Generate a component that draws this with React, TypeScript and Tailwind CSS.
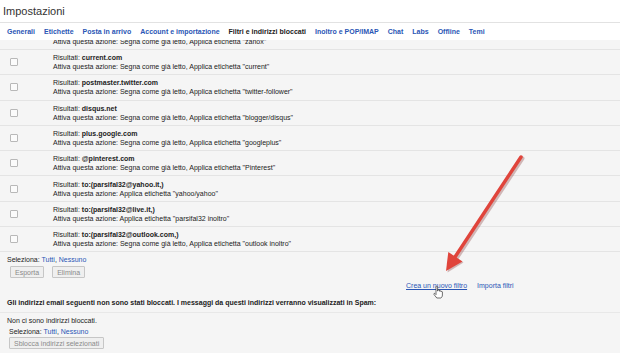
import React from "react"

const tabs = [
  "Generali",
  "Etichette",
  "Posta in arrivo",
  "Account e importazione",
  "Filtri e indirizzi bloccati",
  "Inoltro e POP/IMAP",
  "Chat",
  "Labs",
  "Offline",
  "Temi",
]

const filters = [
  { match: "current.com", action: 'Segna come già letto, Applica etichetta "current"' },
  { match: "postmaster.twitter.com", action: 'Segna come già letto, Applica etichetta "twitter-follower"' },
  { match: "disqus.net", action: 'Segna come già letto, Applica etichetta "blogger/disqus"' },
  { match: "plus.google.com", action: 'Segna come già letto, Applica etichetta "googleplus"' },
  { match: "@pinterest.com", action: 'Segna come già letto, Applica etichetta "Pinterest"' },
  { match: "to:(parsifal32@yahoo.it,)", action: 'Applica etichetta "yahoo/yahoo"' },
  { match: "to:(parsifal32@live.it,)", action: 'Applica etichetta "parsifal32 inoltro"' },
  { match: "to:(parsifal32@outlook.com,)", action: 'Segna come già letto, Applica etichetta "outlook inoltro"' },
]

function Checkbox() {
  return <div className="w-[8px] h-[8px] border border-[#b8b8b8] rounded-[1px] bg-[#fbfbfb]" />
}

function SelectLine() {
  return (
    <p>
      Seleziona: <span className="text-[#2a56b5]">Tutti</span>,{" "}
      <span className="text-[#2a56b5]">Nessuno</span>
    </p>
  )
}

function GreyButton({ label }: { label: string }) {
  return (
    <div className="h-[12px] px-[4px] flex items-center border border-[#c6c6c6] rounded-[1px] bg-[#efefef] text-[#8a8a8a]">
      {label}
    </div>
  )
}

export default function App() {
  return (
    <div className="w-[620px] h-[353px] relative overflow-hidden bg-[#f5f5f5] text-[#222] text-[7px] leading-[9px] font-['Liberation_Sans',Arial,sans-serif]">
      <div className="h-[23px] bg-white flex items-center pl-[3px] text-[11px] text-[#333] border-b border-[#e2e2e2]">
        Impostazioni
      </div>
      <div className="h-[17px] bg-white flex items-center gap-[9px] pl-[7px] font-bold">
        {tabs.map((t) => (
          <span key={t} className={t.startsWith("Filtri") ? "text-[#222]" : "text-[#2a56b5]"}>
            {t}
          </span>
        ))}
      </div>

      <div className="h-[10px] overflow-hidden flex items-end border-b border-[#e4e4e4]">
        <p className="pl-[53px] pb-[3px]">Attiva questa azione: Segna come già letto, Applica etichetta "zanox"</p>
      </div>

      {filters.map((f) => (
        <div key={f.match} className="h-[25.3px] flex items-center border-b border-[#e4e4e4]">
          <div className="w-[53px] pl-[10px]">
            <Checkbox />
          </div>
          <div>
            <p>
              Risultati: <b>{f.match}</b>
            </p>
            <p>Attiva questa azione: {f.action}</p>
          </div>
        </div>
      ))}

      <div className="pl-[7px] pt-[3px]">
        <SelectLine />
        <div className="flex gap-[8px] pl-[3px] mt-[2px]">
          <GreyButton label="Esporta" />
          <GreyButton label="Elimina" />
        </div>
      </div>

      <div className="flex gap-[10px] pl-[406px] mt-[3px]">
        <span className="text-[#2a56b5] underline">Crea un nuovo filtro</span>
        <span className="text-[#2a56b5]">Importa filtri</span>
      </div>

      <div className="mt-[8px] pl-[7px] pb-[5px] border-b border-[#e8e8e8] font-bold">
        Gli indirizzi email seguenti non sono stati bloccati. I messaggi da questi indirizzi verranno visualizzati in Spam:
      </div>
      <div className="pl-[7px] pt-[3px]">
        <p>Non ci sono indirizzi bloccati.</p>
        <div className="pl-[2px] mt-[2px]">
          <SelectLine />
          <div className="flex mt-[1px]">
            <GreyButton label="Sblocca indirizzi selezionati" />
          </div>
        </div>
      </div>

      <svg className="absolute inset-0 pointer-events-none" width="620" height="353" viewBox="0 0 620 353">
        <g opacity="0.25" transform="translate(1.5,1.5)">
          <line x1="521" y1="157" x2="455" y2="257" stroke="#600" strokeWidth="4" strokeLinecap="round" />
          <polygon points="446,271 462,261 448.6,252.4" fill="#600" />
        </g>
        <line x1="521" y1="157" x2="455" y2="257" stroke="#e0443b" strokeWidth="3.5" strokeLinecap="round" />
        <polygon points="446,271 462.5,261.5 448.3,252" fill="#e0443b" />
        <g transform="translate(433,286)">
          <path
            d="M3 0.8 C3 0 4.6 0 4.6 0.8 L4.6 5 L5 5 L5 4 C5 3.3 6.5 3.3 6.5 4 L6.5 5.2 C6.5 4.6 8 4.6 8 5.3 L8 5.8 C8 5.3 9.4 5.3 9.4 6 L9.4 9 C9.4 10.5 8.6 11.5 8 12 L3.8 12 L1 8.5 C0.4 7.7 1.4 7 2 7.6 L3 8.6 Z"
            fill="#fff"
            stroke="#333"
            strokeWidth="0.7"
          />
        </g>
      </svg>
    </div>
  )
}
